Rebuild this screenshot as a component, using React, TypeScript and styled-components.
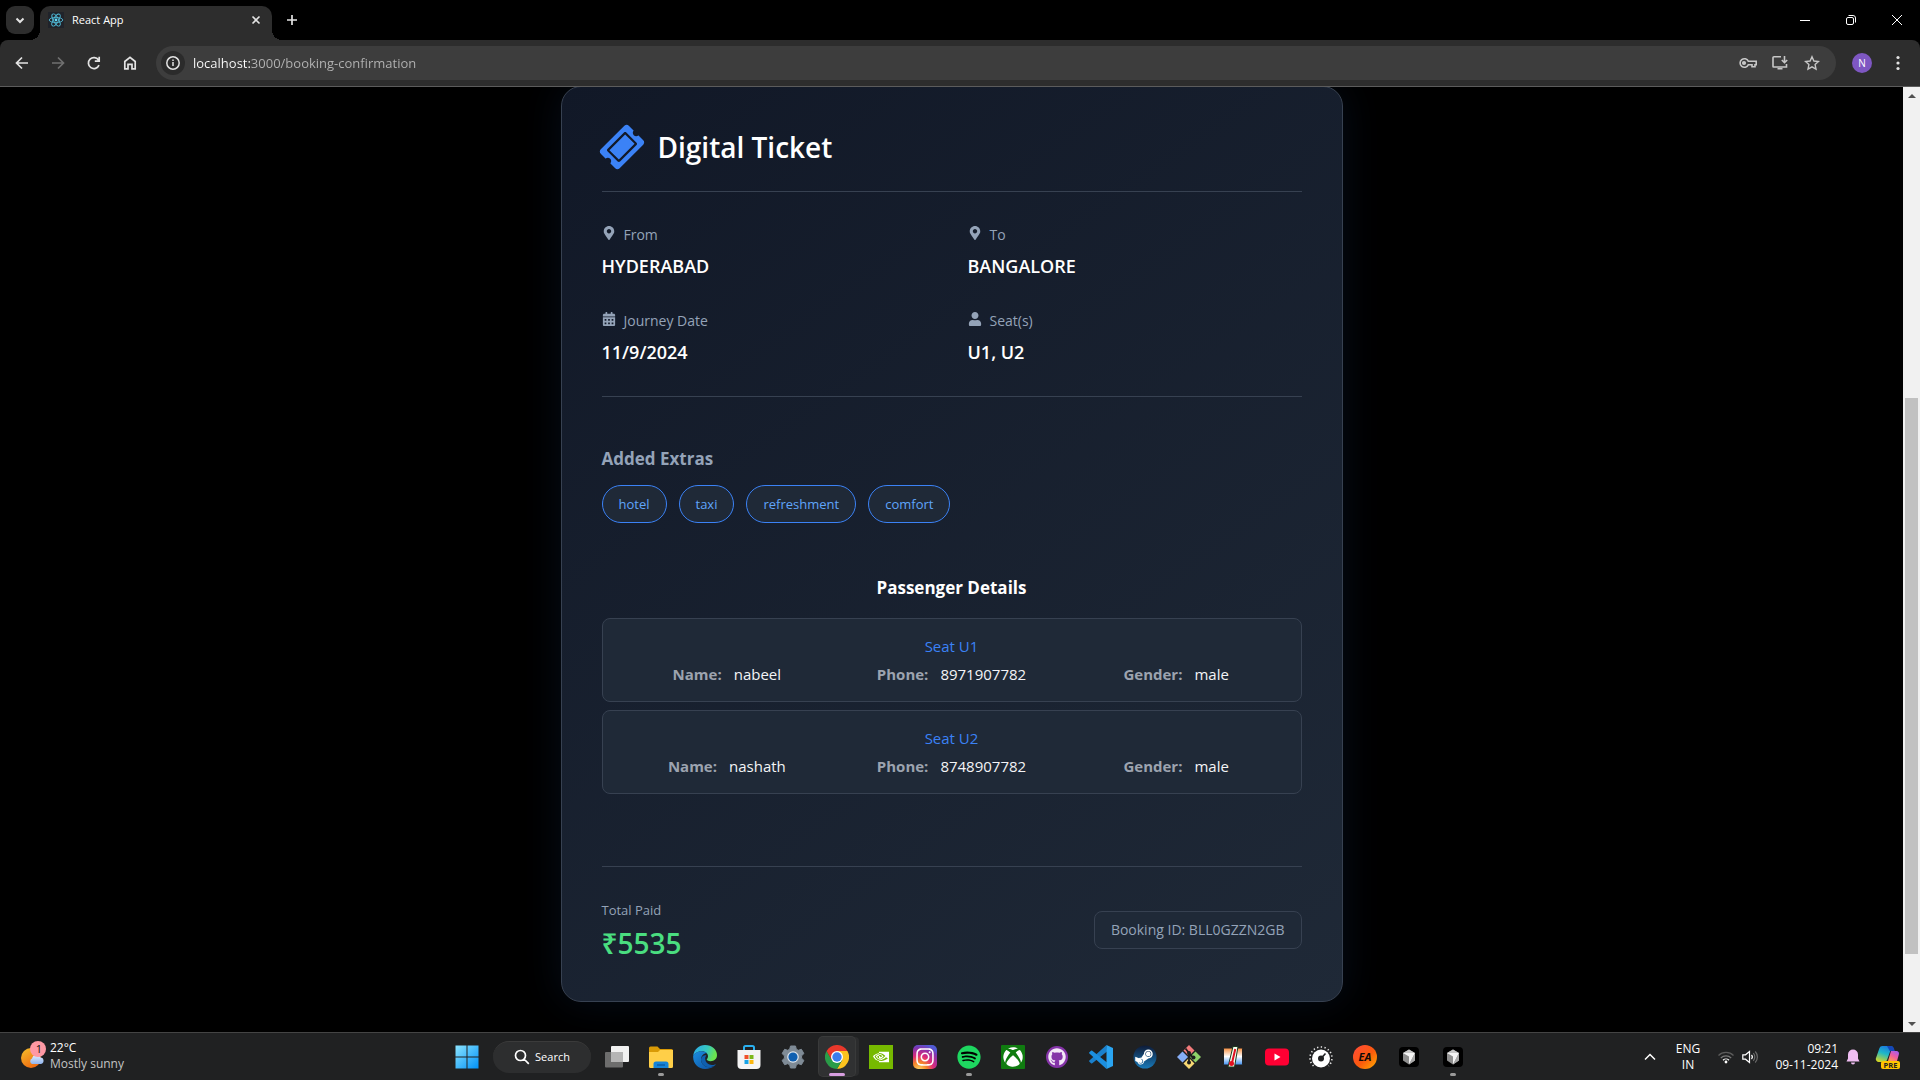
import React from "react";
import styled, { createGlobalStyle, css } from "styled-components";
import {
  FaTicketAlt,
  FaMapMarkerAlt,
  FaCalendarAlt,
  FaUser,
  FaInstagram,
  FaGithub,
  FaSteamSymbol,
  FaSpotify,
  FaXbox,
} from "react-icons/fa";
import { SiNvidia } from "react-icons/si";

const ui = `"Segoe UI", "Open Sans", "Noto Sans", sans-serif`;

const GlobalStyle = createGlobalStyle`
  *, *::before, *::after { box-sizing: border-box; }
  body { margin: 0; background: #000; font-family: ${ui}; color: #fff; overflow: hidden; }
  button, input { font: inherit; color: inherit; }
  h1, h2, h3, p, dl, dd, dt, ul { margin: 0; padding: 0; }
  svg { display: block; flex: none; }
`;

const Screen = styled.div`
  display: flex;
  flex-direction: column;
  height: 100vh;
`;

const bare = css`
  display: flex;
  align-items: center;
  justify-content: center;
  padding: 0;
  border: 0;
  background: none;
`;

/* ---------- Browser ---------- */

const TabStrip = styled.header`
  display: flex;
  height: 40px;
  flex: none;
  padding-left: 6px;
  background: #000;
`;

const TabSearch = styled.button`
  ${bare}
  width: 28px;
  height: 28px;
  margin: 6px 6px 0 0;
  border-radius: 9px;
  background: #2d2d2d;
`;

const Tab = styled.div`
  display: flex;
  align-items: center;
  width: 232px;
  height: 34px;
  margin-top: 6px;
  padding: 0 8px 6px;
  border-radius: 10px 10px 0 0;
  background: #2d2d2d;
  font-size: 11px;
  line-height: 16px;
  position: relative;

  &::before,
  &::after {
    content: "";
    position: absolute;
    bottom: 0;
    width: 10px;
    height: 10px;
  }
  &::before {
    left: -10px;
    background: radial-gradient(circle at 0 0, transparent 10px, #2d2d2d 10px);
  }
  &::after {
    right: -10px;
    background: radial-gradient(circle at 100% 0, transparent 10px, #2d2d2d 10px);
  }
`;

const TabTitle = styled.span`
  flex: 1;
  margin-left: 8px;
`;

const IconButton = styled.button<{ $w?: number; $h?: number }>`
  ${bare}
  width: ${(p) => p.$w ?? 36}px;
  height: ${(p) => p.$h ?? 28}px;
`;

const NewTab = styled(IconButton)`
  margin: 6px 0 0 6px;
`;

const WindowControls = styled.div`
  display: flex;
  margin-top: -4px;
  margin-left: auto;
`;

const ToolbarShell = styled.div`
  flex: none;
  background: #000;
`;

const Toolbar = styled.nav`
  display: flex;
  align-items: center;
  height: 47px;
  padding: 0 8px 0 4px;
  border-radius: 8px 8px 0 0;
  border-bottom: 1px solid #5c5c5c;
  background: #2d2d2d;
`;

const AddressBar = styled.label`
  display: flex;
  align-items: center;
  flex: 1;
  height: 34px;
  margin: 0 8px;
  padding: 0 8px 0 5px;
  border-radius: 17px;
  background: #3d3d3d;
`;

const SiteInfo = styled.span`
  display: flex;
  align-items: center;
  justify-content: center;
  width: 24px;
  height: 24px;
  border-radius: 50%;
  background: #2b2b2b;
`;

const UrlInput = styled.input`
  flex: 1;
  height: 24px;
  margin-left: 8px;
  padding: 0;
  border: 0;
  outline: 0;
  font-size: 13px;
  line-height: 24px;
  color: transparent;
  background: linear-gradient(90deg, #fff 58px, #b4b4b4 58px);
  background-clip: text;
  -webkit-background-clip: text;
`;

const Avatar = styled.button`
  ${bare}
  width: 20px;
  height: 20px;
  margin: 0 12px 0 8px;
  border-radius: 50%;
  background: #7e57c2;
  font-size: 10px;
`;

/* ---------- Page ---------- */

const Viewport = styled.div`
  display: flex;
  flex: 1;
  min-height: 0;
  background: #000;
`;

const Page = styled.main`
  flex: 1;
  overflow: hidden;
`;

const Ticket = styled.article`
  width: 782px;
  max-width: 100%;
  margin: -1px auto 0;
  padding: 40px;
  border: 1px solid #374151;
  border-radius: 20px;
  background: linear-gradient(145deg, #111827, #1f2937);
  box-shadow: 0 0 40px rgba(59, 130, 246, 0.1);
`;

const TicketHeader = styled.header`
  display: flex;
  align-items: center;
  gap: 16px;
  padding-bottom: 24px;
  border-bottom: 1px solid #374151;
  color: #3b82f6;

  svg {
    transform: rotate(-45deg);
  }
`;

const Title = styled.h1`
  color: #fff;
  font-size: 28px;
  font-weight: 600;
  line-height: 40px;
`;

const TripGrid = styled.dl`
  display: grid;
  grid-template-columns: 1fr 1fr;
  gap: 30px 32px;
  padding: 32px 0 30px;
  border-bottom: 1px solid #374151;
`;

const Label = styled.dt`
  display: flex;
  align-items: baseline;
  gap: 8px;
  color: #94a3b8;
  font-size: 14px;
  line-height: 22px;
`;

const Value = styled.dd`
  margin-top: 6px;
  font-size: 18px;
  font-weight: 600;
  line-height: 28px;
`;

const Extras = styled.section`
  padding: 48px 0 51px;
`;

const ExtrasTitle = styled.h2`
  color: #94a3b8;
  font-size: 17px;
  font-weight: 700;
  line-height: 28px;
`;

const Pills = styled.ul`
  display: flex;
  flex-wrap: wrap;
  gap: 12px;
  margin-top: 12px;
  list-style: none;
`;

const Pill = styled.li`
  padding: 8px 16px;
  border: 1px solid #3b82f6;
  border-radius: 20px;
  background: #1f2937;
  color: #60a5fa;
  font-size: 13px;
  line-height: 20px;
`;

const Passengers = styled.section`
  display: flex;
  flex-direction: column;
  gap: 8px;
  padding-bottom: 72px;
  border-bottom: 1px solid #374151;
`;

const PassengersTitle = styled.h2`
  margin-bottom: 8px;
  font-size: 17px;
  font-weight: 700;
  line-height: 28px;
  text-align: center;
`;

const Passenger = styled.div`
  padding: 16px;
  border: 1px solid #374151;
  border-radius: 8px;
  background: #1f2937;
  font-size: 15px;
  line-height: 22px;
  text-align: center;
`;

const Seat = styled.h3`
  color: #3b82f6;
  font-size: 15px;
  font-weight: 500;
  line-height: 22px;
`;

const Fields = styled.dl`
  display: grid;
  grid-template-columns: repeat(3, 1fr);
  gap: 8px;
  margin-top: 6px;
`;

const Field = styled.div`
  display: flex;
  justify-content: center;
  gap: 12px;

  dt {
    color: #9ca3af;
    font-weight: 700;
  }
  dd {
    color: #f3f4f6;
  }
`;

const TicketFooter = styled.footer`
  display: flex;
  align-items: center;
  justify-content: space-between;
  padding-top: 32px;
`;

const TotalLabel = styled.p`
  color: #94a3b8;
  font-size: 13px;
  line-height: 22px;
`;

const Total = styled.p`
  margin-top: 4px;
  color: #4ade80;
  font-size: 28px;
  font-weight: 600;
  line-height: 36px;
`;

const BookingId = styled.p`
  padding: 8px 16px;
  border: 1px solid #374151;
  border-radius: 8px;
  background: #1f2937;
  color: #94a3b8;
  font-size: 14px;
  line-height: 20px;
`;

const Scrollbar = styled.div`
  display: flex;
  flex-direction: column;
  align-items: center;
  width: 17px;
  background: #f1f1f1;
`;

const Gap = styled.div<{ $size: number }>`
  flex: ${(p) => p.$size};
`;

const Thumb = styled.div`
  flex: 556;
  width: 13px;
  background: #c1c1c1;
`;

/* ---------- Taskbar ---------- */

const Taskbar = styled.footer`
  display: grid;
  grid-template-columns: 1fr auto 1fr;
  align-items: center;
  flex: none;
  height: 48px;
  border-top: 1px solid #444;
  background: #202122;
  font-size: 12px;
  line-height: 16px;
`;

const Weather = styled.button`
  ${bare}
  justify-content: flex-start;
  gap: 4px;
  padding: 0 0 2px 20px;
  text-align: left;

  small {
    display: block;
    font-size: 12px;
    color: #c4c4c4;
  }
`;

const Temperature = styled.span`
  font-size: 12px;
`;

const Apps = styled.div`
  display: flex;
  align-items: center;
`;

const SearchBox = styled.button`
  ${bare}
  gap: 5px;
  width: 98px;
  height: 32px;
  margin: 0 4px;
  border-top: 1px solid #3b3b3b;
  border-radius: 16px;
  background: #2d2e2f;
  font-size: 11px;
`;

const AppButton = styled.button<{ $active?: boolean; $mark?: "open" | "focus" }>`
  ${bare}
  width: 44px;
  height: 47px;
  position: relative;

  &::before {
    content: "";
    position: absolute;
    inset: 4px;
    border-radius: 4px;
    ${(p) => p.$active && "background: #303132; box-shadow: 0 0 0 1px #393a3a, 4px 0 0 0 #2b2c2d;"}
  }
  &::after {
    content: "";
    position: absolute;
    bottom: 4px;
    width: ${(p) => (p.$mark === "focus" ? 16 : 6)}px;
    height: 3px;
    border-radius: 2px;
    background: ${(p) => (p.$mark === "focus" ? "#d79ee0" : p.$mark ? "#9a9a9a" : "transparent")};
  }
  svg {
    position: relative;
  }
`;

const Tray = styled.div`
  display: flex;
  align-items: center;
  justify-content: flex-end;
  padding-right: 12px;
`;

const Language = styled.button`
  ${bare}
  width: 40px;
  margin: 0 6px;
  text-align: center;
`;

const Clock = styled.button`
  ${bare}
  justify-content: flex-end;
  width: 76px;
  text-align: right;
`;

/* ---------- Drawings ---------- */

type StrokeProps = { size?: number; color?: string; width?: number; d: string; box?: number };
const Stroke = ({ size = 16, color = "#e3e3e3", width = 2, d, box = 16 }: StrokeProps) => (
  <svg width={size} height={size} viewBox={`0 0 ${box} ${box}`} fill="none" stroke={color} strokeWidth={width}>
    <path d={d} />
  </svg>
);

const ReactMark = () => (
  <svg width="16" height="16" viewBox="0 0 16 16">
    <rect width="16" height="16" fill="#20232a" />
    <g fill="none" stroke="#4fb8d4" strokeWidth="0.9">
      <ellipse cx="8" cy="8" rx="6.8" ry="2.6" />
      <ellipse cx="8" cy="8" rx="6.8" ry="2.6" transform="rotate(60 8 8)" />
      <ellipse cx="8" cy="8" rx="6.8" ry="2.6" transform="rotate(120 8 8)" />
    </g>
    <circle cx="8" cy="8" r="1.4" fill="#61dafb" />
  </svg>
);

const WeatherArt = () => (
  <svg width="26" height="30" viewBox="0 0 26 30">
    <defs>
      <linearGradient id="sun" x1="0" y1="0" x2="0.6" y2="1">
        <stop offset="0" stopColor="#f6c02c" />
        <stop offset="1" stopColor="#ee6a10" />
      </linearGradient>
      <linearGradient id="cloud" x1="0" y1="0" x2="0" y2="1">
        <stop offset="0" stopColor="#e4efff" />
        <stop offset="1" stopColor="#8fb4ee" />
      </linearGradient>
    </defs>
    <circle cx="11" cy="17" r="10" fill="url(#sun)" />
    <path d="M12 23a3 3 0 0 1 0-5.500a4.500 4.500 0 0 1 8.500-1a3.300 3.300 0 0 1 .500 6.500z" fill="url(#cloud)" />
    <circle cx="18" cy="8" r="8" fill="#ff99a4" />
    <text x="19" y="12" fontSize="11" fill="#111" textAnchor="middle">1</text>
  </svg>
);

const WindowsMark = () => (
  <svg width="24" height="24" viewBox="0 0 24 24">
    <defs>
      <linearGradient id="win" x1="0" y1="0" x2="1" y2="1">
        <stop offset="0" stopColor="#8be4ff" />
        <stop offset="1" stopColor="#0091f8" />
      </linearGradient>
    </defs>
    <path d="M.5 .5h11v11H.5zM12.500 .5h11v11h-11zM.5 12.500h11v11H.5zM12.500 12.500h11v11h-11z" fill="url(#win)" />
  </svg>
);

const TaskView = () => (
  <svg width="24" height="24" viewBox="0 0 24 24">
    <rect x="6" y="1" width="18" height="16" rx="1" fill="#f1f1f1" />
    <rect x="0" y="7" width="18" height="15.500" rx="1" fill="#6d6d6d" />
    <path d="M6 7h12v10H6z" fill="#b5b5b5" />
  </svg>
);

const Folder = () => (
  <svg width="24" height="24" viewBox="0 0 24 24">
    <path d="M0 3a1.500 1.500 0 0 1 1.500-1.500h7l2.500 2.500h11.500a1.500 1.500 0 0 1 1.500 1.500v8H0z" fill="#d99a06" />
    <path d="M0 7h9l2-2h13v16.500a1.500 1.500 0 0 1-1.500 1.500h-21A1.500 1.500 0 0 1 0 21.500z" fill="#ffcf48" />
    <path d="M4.500 23v-4a2.500 2.500 0 0 1 2.500-2.500h10a2.500 2.500 0 0 1 2.500 2.500v4z" fill="#1583d8" />
    <path d="M8 20h8" stroke="#0a5ca8" strokeWidth="1.500" />
  </svg>
);

const Edge = () => (
  <svg width="24" height="24" viewBox="0 0 24 24">
    <defs>
      <linearGradient id="edgeA" x1="0" y1="0" x2="1" y2="0.300">
        <stop offset="0" stopColor="#2ba8ee" />
        <stop offset="0.600" stopColor="#36c8c0" />
        <stop offset="1" stopColor="#6be34e" />
      </linearGradient>
      <linearGradient id="edgeB" x1="0" y1="0" x2="1" y2="1">
        <stop offset="0" stopColor="#1b8ee0" />
        <stop offset="1" stopColor="#0d4f9e" />
      </linearGradient>
    </defs>
    <path d="M.3 10.500C1 4.200 6 0 12 0c7 0 12 4.800 12 10 0 4-3 6.200-6.300 6.200-2.500 0-4-.8-4-1.600 0-.7 1.300-1.200 1.300-3.400 0-2.700-2.600-5-6-5-4 0-7 1.800-8.700 4.300z" fill="url(#edgeA)" />
    <path d="M.2 10.800C1.500 8 5 6.200 9 6.200c2.300 0 4 .8 5 2-3-.3-6 2.400-6 6.300 0 4.500 4 7.700 8.500 7.700 2.500 0 4.200-.7 5.500-1.600C19.800 22.700 16 24 12 24 5 24-.5 18 .2 10.800z" fill="url(#edgeB)" />
    <path d="M8 14.500c0 4.500 4 7.700 8.500 7.700 2.300 0 4.200-.8 5.900-2.200.4-.4.1-.9-.5-.6-4.500 1.800-9.300-.8-9.700-5.300-.1-1.800.7-3 1.200-3.800-2.600-.5-5.400 1.200-5.400 4.200z" fill="#0f5fae" />
  </svg>
);

const Store = () => (
  <svg width="24" height="24" viewBox="0 0 24 24">
    <path d="M7 6V2.500A1.500 1.500 0 0 1 8.500 1h7A1.500 1.500 0 0 1 17 2.500V6" fill="none" stroke="#2ab0ef" strokeWidth="2" />
    <path d="M.5 5h23v15a4 4 0 0 1-4 4h-15a4 4 0 0 1-4-4z" fill="#f4f4f4" />
    <path d="M7.500 10h4v4h-4z" fill="#f0512a" />
    <path d="M12.500 10h4v4h-4z" fill="#7cb81a" />
    <path d="M7.500 15h4v4h-4z" fill="#16a3e8" />
    <path d="M12.500 15h4v4h-4z" fill="#fbb70f" />
  </svg>
);

const Settings = () => (
  <svg width="24" height="24" viewBox="0 0 24 24">
    <path
      d="M9.500 1h5l.8 3.200 2 1.100 3.100-1 2.500 4.300-2.300 2.200v2.400l2.300 2.200-2.500 4.300-3.100-1-2 1.100-.8 3.200h-5l-.8-3.200-2-1.100-3.100 1-2.500-4.300 2.300-2.200v-2.400L1.100 8.600l2.500-4.300 3.100 1 2-1.100z"
      fill="#7f8b96"
      stroke="#7f8b96"
      strokeLinejoin="round"
    />
    <circle cx="12" cy="12" r="5.800" fill="#dfe6ee" />
    <circle cx="12" cy="12" r="4.600" fill="#0f5fb0" />
  </svg>
);

const Chrome = () => (
  <svg width="24" height="24" viewBox="0 0 24 24">
    <path d="M12 6h10.400A12 12 0 0 1 12 24l5.200-9z" fill="#fcc31e" />
    <path d="M1.600 6A12 12 0 0 0 12 24l5.200-9H6.800z" fill="#2a9c48" />
    <path d="M1.600 6A12 12 0 0 1 22.400 6H12l-5.200 9z" fill="#e8382b" />
    <circle cx="12" cy="12" r="6" fill="#fff" />
    <circle cx="12" cy="12" r="4.700" fill="#3b7ded" />
  </svg>
);

const tile = (bg: string, radius: number, glyph: React.ReactNode) => (
  <svg width="24" height="24" viewBox="0 0 24 24">
    <rect width="24" height="24" rx={radius} fill={bg} />
    {glyph}
  </svg>
);

const Nvidia = () => tile("#76b900", 0, <SiNvidia x="4" y="4" size={16} color="#fff" />);

const Instagram = () => (
  <svg width="24" height="24" viewBox="0 0 24 24">
    <defs>
      <radialGradient id="insta" cx="0.250" cy="1.050" r="1.100">
        <stop offset="0" stopColor="#fedb6a" />
        <stop offset="0.300" stopColor="#f58529" />
        <stop offset="0.550" stopColor="#dd2a7b" />
        <stop offset="0.850" stopColor="#8134af" />
        <stop offset="1" stopColor="#515bd4" />
      </radialGradient>
    </defs>
    <rect width="24" height="24" rx="5" fill="url(#insta)" />
    <FaInstagram x="2" y="2" size={20} color="#fff" />
  </svg>
);

const Spotify = () => (
  <svg width="24" height="24" viewBox="0 0 24 24">
    <circle cx="12" cy="12" r="11" fill="#000" />
    <FaSpotify size={24} color="#1ed760" />
  </svg>
);

const Xbox = () => tile("#107c10", 1, <FaXbox x="2" y="2" size={20} color="#fff" />);

const Github = () => (
  <svg width="24" height="24" viewBox="0 0 24 24">
    <circle cx="12" cy="12" r="11" fill="#8534a8" />
    <FaGithub x="3" y="3" size={18} color="#f3e8f7" />
  </svg>
);

const VsCode = () => (
  <svg width="24" height="24" viewBox="0 0 24 24">
    <path d="M17.500 0L.4 15.400a.9.900 0 0 0 0 1.300l1.600 1.500a1 1 0 0 0 1.300 0L18 6.500z" fill="#1a80cc" />
    <path d="M17.500 24L.4 8.600a.9.900 0 0 1 0-1.300l1.600-1.500a1 1 0 0 1 1.300 0L18 17.500z" fill="#1b8fe0" />
    <path d="M17.500 0L24 3v18l-6.500 3z" fill="#2aa5f2" />
  </svg>
);

const Steam = () => (
  <svg width="24" height="24" viewBox="0 0 24 24">
    <defs>
      <linearGradient id="steam" x1="0" y1="0" x2="0" y2="1">
        <stop offset="0" stopColor="#0e1b38" />
        <stop offset="1" stopColor="#1879b8" />
      </linearGradient>
    </defs>
    <circle cx="12" cy="12" r="11.500" fill="url(#steam)" />
    <FaSteamSymbol x="1" y="2" size={20} color="#fff" />
  </svg>
);

const Git = () => (
  <svg width="24" height="24" viewBox="0 0 24 24">
    <path d="M12 0l5.500 5.500L12 11 6.500 5.500z" fill="#f27b7b" />
    <path d="M18.500 6.500L24 12l-5.500 5.500L13 12z" fill="#8fd26a" />
    <path d="M5.500 6.500L11 12l-5.500 5.500L0 12z" fill="#86adf5" />
    <path d="M12 13l5.500 5.500L12 24l-5.500-5.500z" fill="#f8d873" />
    <path d="M8.500 3.500L12 8v9.500M12 8.500l4 4" fill="none" stroke="#1c1c1c" strokeWidth="1.800" />
    <circle cx="12" cy="8" r="2" fill="#1c1c1c" />
    <circle cx="12" cy="17.500" r="2" fill="#1c1c1c" />
    <circle cx="16.500" cy="12.500" r="2" fill="#1c1c1c" />
  </svg>
);

const Thermometer = () => (
  <svg width="24" height="24" viewBox="0 0 24 24">
    <defs>
      <linearGradient id="heat" x1="0" y1="0" x2="0" y2="1">
        <stop offset="0" stopColor="#f58b3a" />
        <stop offset="0.500" stopColor="#ffffff" />
        <stop offset="1" stopColor="#3a8df0" />
      </linearGradient>
    </defs>
    <rect x="2.500" y="3" width="19" height="17" rx="1" fill="url(#heat)" stroke="#222" />
    <path d="M12 1.500h5L13.500 22H7z" fill="#f4fff0" stroke="#1f3a1f" />
    <path d="M14.300 4L11 18" stroke="#e01020" strokeWidth="2" />
    <circle cx="10.500" cy="18.500" r="2.500" fill="#e01020" />
  </svg>
);

const YouTube = () => (
  <svg width="24" height="24" viewBox="0 0 24 24">
    <rect y="3.500" width="24" height="17" rx="4" fill="#ff0033" />
    <path d="M9.500 8.500l6 3.500-6 3.500z" fill="#fff" />
  </svg>
);

const Dial = () => (
  <svg width="24" height="24" viewBox="0 0 24 24">
    <path d="M4.500 21A11 11 0 1 1 19.500 21" fill="none" stroke="#e8e8e8" strokeWidth="1.600" strokeDasharray="1.300 2.400" />
    <circle cx="12" cy="13.500" r="9" fill="#fff" />
    <circle cx="12" cy="13.500" r="3" fill="#202122" />
    <path d="M12 13.500l4.500-5" stroke="#202122" strokeWidth="1.600" />
  </svg>
);

const Ea = () => (
  <svg width="24" height="24" viewBox="0 0 24 24">
    <defs>
      <linearGradient id="ea" x1="0" y1="0" x2="1" y2="1">
        <stop offset="0" stopColor="#ff4a3c" />
        <stop offset="0.550" stopColor="#fb5a0c" />
        <stop offset="1" stopColor="#ffb000" />
      </linearGradient>
    </defs>
    <circle cx="12" cy="12" r="12" fill="url(#ea)" />
    <text x="12" y="16" fontSize="11" fontWeight="700" fontStyle="italic" textAnchor="middle" fill="#120a08">EA</text>
  </svg>
);

const Cube = () => (
  <svg width="24" height="24" viewBox="0 0 24 24">
    <rect x="2" y="2" width="20" height="20" rx="4" fill="#000" />
    <path d="M12 4.500l6 3.500v7.500L12 19.500l-6-4V8z" fill="#8f8f8f" />
    <path d="M12 4.500L18 8H6z" fill="#c8c8c8" />
    <path d="M6 8h12l-6 11.500V11.500z" fill="#f4f4f4" />
    <path d="M18 8v7.500l-6 4z" fill="#a8a8a8" />
  </svg>
);

const Copilot = () => (
  <svg width="26" height="26" viewBox="0 0 26 26">
    <defs>
      <linearGradient id="copA" x1="0.600" y1="0" x2="0.200" y2="1">
        <stop offset="0" stopColor="#1a78e0" />
        <stop offset="0.450" stopColor="#1fb8c8" />
        <stop offset="1" stopColor="#d8d820" />
      </linearGradient>
      <linearGradient id="copB" x1="0.800" y1="0" x2="0.200" y2="1">
        <stop offset="0" stopColor="#a45cf0" />
        <stop offset="0.500" stopColor="#ee5ca0" />
        <stop offset="1" stopColor="#ff9a50" />
      </linearGradient>
    </defs>
    <path d="M7.500 2h8a3 3 0 0 1 2.800 2l1 3h-4L12 16a3 3 0 0 1-2.800 2H4a3 3 0 0 1-3-4L4.500 4a3 3 0 0 1 3-2z" fill="url(#copA)" />
    <path d="M12 2h4a3 3 0 0 1 2.800 2l1 3h-5z" fill="#1548b8" />
    <path d="M16 7h5.500a2.500 2.500 0 0 1 2.400 3.200L22 17h-9z" fill="url(#copB)" />
    <rect x="6" y="17" width="19" height="8" rx="2" fill="#ffc400" />
    <text x="15.500" y="23.800" fontSize="7.500" fontWeight="700" textAnchor="middle" fill="#222">PRE</text>
  </svg>
);

/* ---------- Data ---------- */

const trip = [
  { icon: <FaMapMarkerAlt size={14} />, label: "From", value: "HYDERABAD" },
  { icon: <FaMapMarkerAlt size={14} />, label: "To", value: "BANGALORE" },
  { icon: <FaCalendarAlt size={14} />, label: "Journey Date", value: "11/9/2024" },
  { icon: <FaUser size={14} />, label: "Seat(s)", value: "U1, U2" },
];

const extras = ["hotel", "taxi", "refreshment", "comfort"];

const passengers = [
  { seat: "U1", Name: "nabeel", Phone: "8971907782", Gender: "male" },
  { seat: "U2", Name: "nashath", Phone: "8748907782", Gender: "male" },
];

const apps: { name: string; art: React.ReactNode; mark?: "open" | "focus" }[] = [
  { name: "Task view", art: <TaskView /> },
  { name: "File Explorer", art: <Folder />, mark: "open" },
  { name: "Edge", art: <Edge /> },
  { name: "Store", art: <Store /> },
  { name: "Settings", art: <Settings /> },
  { name: "Chrome", art: <Chrome />, mark: "focus" },
  { name: "NVIDIA", art: <Nvidia /> },
  { name: "Instagram", art: <Instagram /> },
  { name: "Spotify", art: <Spotify />, mark: "open" },
  { name: "Xbox", art: <Xbox /> },
  { name: "GitHub", art: <Github /> },
  { name: "VS Code", art: <VsCode /> },
  { name: "Steam", art: <Steam /> },
  { name: "Git", art: <Git /> },
  { name: "Temperature", art: <Thermometer /> },
  { name: "YouTube", art: <YouTube /> },
  { name: "Fan control", art: <Dial /> },
  { name: "EA", art: <Ea /> },
  { name: "Cursor", art: <Cube /> },
  { name: "Cursor window", art: <Cube />, mark: "open" },
];

export default function App() {
  return (
    <Screen>
      <GlobalStyle />
      <TabStrip>
        <TabSearch aria-label="Search tabs">
          <Stroke size={10} box={10} d="M1.500 3.500L5 7l3.500-3.500" />
        </TabSearch>
        <Tab>
          <ReactMark />
          <TabTitle>React App</TabTitle>
          <IconButton $w={16} $h={16} aria-label="Close tab">
            <Stroke size={10} box={10} width={1.6} d="M1.500 1.500l7 7M8.500 1.500l-7 7" />
          </IconButton>
        </Tab>
        <NewTab $w={28} aria-label="New tab">
          <Stroke size={12} box={12} width={1.7} d="M6 1v10M1 6h10" />
        </NewTab>
        <WindowControls>
          <IconButton $w={46} $h={48} aria-label="Minimize">
            <Stroke size={10} box={10} width={1} color="#fff" d="M0 5.500h10" />
          </IconButton>
          <IconButton $w={46} $h={48} aria-label="Restore">
            <Stroke size={10} box={10} width={1} color="#fff" d="M2 2.500h4a1.500 1.500 0 0 1 1.500 1.500v4A1.500 1.500 0 0 1 6 9.500H2A1.500 1.500 0 0 1 .5 8V4A1.500 1.500 0 0 1 2 2.500zM2.500 .5H7A2.500 2.500 0 0 1 9.500 3v4.500" />
          </IconButton>
          <IconButton $w={46} $h={48} aria-label="Close">
            <Stroke size={10} box={10} width={1} color="#fff" d="M0 0l10 10M10 0L0 10" />
          </IconButton>
        </WindowControls>
      </TabStrip>
      <ToolbarShell>
        <Toolbar>
          <IconButton aria-label="Back">
            <Stroke width={1.7} d="M14 8H2.500M8 2.500L2.500 8 8 13.500" />
          </IconButton>
          <IconButton aria-label="Forward">
            <Stroke width={1.7} color="#707070" d="M2 8h11.500M8 2.500L13.500 8 8 13.500" />
          </IconButton>
          <IconButton aria-label="Reload">
            <Stroke width={1.7} d="M13 10.200A5.500 5.500 0 1 1 12.500 5M13.200 1.800v4.400H8.800" />
          </IconButton>
          <IconButton aria-label="Home">
            <Stroke width={1.7} d="M2.800 6.500L8 2.300l5.200 4.200v7.300H10V9.300H6v4.500H2.800z" />
          </IconButton>
          <AddressBar>
            <SiteInfo>
              <Stroke width={1.5} d="M8 1.800a6.200 6.200 0 1 0 0 12.400A6.200 6.200 0 0 0 8 1.800zM8 7v4M8 4.600v1.500" />
            </SiteInfo>
            <UrlInput aria-label="Address" defaultValue="localhost:3000/booking-confirmation" />
            <IconButton $w={32} aria-label="Passwords">
              <svg width="18" height="12" viewBox="0 0 18 12" fill="none" stroke="#c7c7c7" strokeWidth="1.600">
                <path d="M9.300 4.200A4.300 4.300 0 1 0 9.300 7.800H13v2h3v-2h1.200V4.200z" />
                <circle cx="5" cy="6" r="1.300" fill="#c7c7c7" />
              </svg>
            </IconButton>
            <IconButton $w={32} aria-label="Install app">
              <Stroke color="#c7c7c7" width={1.6} d="M9 1.800H2a1 1 0 0 0-1 1v8.700a.5.500 0 0 0 .5.500h13V9M5.500 13.800h5M12.500 1v6.500M9.800 5l2.700 2.700L15.200 5" />
            </IconButton>
            <IconButton $w={32} aria-label="Bookmark">
              <Stroke color="#c7c7c7" width={1.4} d="M8 1.800l1.900 4.200 4.600.5-3.400 3.100.9 4.500L8 11.800l-4 2.300.9-4.500L1.500 6.500l4.600-.5z" />
            </IconButton>
          </AddressBar>
          <Avatar aria-label="Profile">N</Avatar>
          <IconButton $w={28} aria-label="Menu">
            <svg width="4" height="16" viewBox="0 0 4 16" fill="#e3e3e3">
              <circle cx="2" cy="2.500" r="1.600" />
              <circle cx="2" cy="8" r="1.600" />
              <circle cx="2" cy="13.500" r="1.600" />
            </svg>
          </IconButton>
        </Toolbar>
      </ToolbarShell>

      <Viewport>
        <Page>
          <Ticket>
            <TicketHeader>
              <FaTicketAlt size={40} />
              <Title>Digital Ticket</Title>
            </TicketHeader>
            <TripGrid>
              {trip.map((t) => (
                <div key={t.label}>
                  <Label>
                    {t.icon}
                    {t.label}
                  </Label>
                  <Value>{t.value}</Value>
                </div>
              ))}
            </TripGrid>
            <Extras>
              <ExtrasTitle>Added Extras</ExtrasTitle>
              <Pills>
                {extras.map((e) => (
                  <Pill key={e}>{e}</Pill>
                ))}
              </Pills>
            </Extras>
            <Passengers>
              <PassengersTitle>Passenger Details</PassengersTitle>
              {passengers.map((p) => (
                <Passenger key={p.seat}>
                  <Seat>Seat {p.seat}</Seat>
                  <Fields>
                    {(["Name", "Phone", "Gender"] as const).map((k) => (
                      <Field key={k}>
                        <dt>{k}:</dt>
                        <dd>{p[k]}</dd>
                      </Field>
                    ))}
                  </Fields>
                </Passenger>
              ))}
            </Passengers>
            <TicketFooter>
              <div>
                <TotalLabel>Total Paid</TotalLabel>
                <Total>₹5535</Total>
              </div>
              <BookingId>Booking ID: BLL0GZZN2GB</BookingId>
            </TicketFooter>
          </Ticket>
        </Page>
        <Scrollbar>
          <IconButton $w={17} $h={17} aria-label="Scroll up">
            <svg width="8" height="4" viewBox="0 0 8 4"><path d="M4 0l4 4H0z" fill="#505050" /></svg>
          </IconButton>
          <Gap $size={294} />
          <Thumb />
          <Gap $size={61} />
          <IconButton $w={17} $h={17} aria-label="Scroll down">
            <svg width="8" height="4" viewBox="0 0 8 4"><path d="M4 4l4-4H0z" fill="#505050" /></svg>
          </IconButton>
        </Scrollbar>
      </Viewport>

      <Taskbar>
        <Weather>
          <WeatherArt />
          <Temperature>
            22°C
            <small>Mostly sunny</small>
          </Temperature>
        </Weather>
        <Apps>
          <AppButton aria-label="Start">
            <WindowsMark />
          </AppButton>
          <SearchBox>
            <Stroke width={1.7} color="#fff" d="M6.500 1.500a5 5 0 1 0 0 10a5 5 0 0 0 0-10zM10 10l4.800 4.800" />
            Search
          </SearchBox>
          {apps.map((a) => (
            <AppButton key={a.name} aria-label={a.name} $mark={a.mark} $active={a.mark === "focus"}>
              {a.art}
            </AppButton>
          ))}
        </Apps>
        <Tray>
          <IconButton $w={24} aria-label="Hidden icons">
            <Stroke size={12} box={12} width={1.5} color="#fff" d="M1 8.500l5-5 5 5" />
          </IconButton>
          <Language>
            ENG
            <br />
            IN
          </Language>
          <IconButton $w={24} aria-label="Network">
            <svg width="16" height="16" viewBox="0 0 16 16" fill="none" strokeWidth="1.200">
              <path d="M.5 6.500a10.500 10.500 0 0 1 15 0" stroke="#5c5c5c" />
              <path d="M2.800 9a7.500 7.500 0 0 1 10.400 0" stroke="#777" />
              <path d="M5 11.200a4.300 4.300 0 0 1 6 0" stroke="#fff" />
              <circle cx="8" cy="13" r="1.400" fill="#fff" />
            </svg>
          </IconButton>
          <IconButton $w={24} aria-label="Volume">
            <svg width="16" height="16" viewBox="0 0 16 16" fill="none" strokeWidth="1.200">
              <path d="M.8 5.800h2.700L7.500 2.500v11L3.500 10.200H.8z" stroke="#fff" />
              <path d="M9.500 6a3 3 0 0 1 0 4" stroke="#fff" />
              <path d="M11.300 4.200a5.500 5.500 0 0 1 0 7.600M13.200 2.500a8 8 0 0 1 0 11" stroke="#6a6a6a" />
            </svg>
          </IconButton>
          <Clock>
            <span>
              09:21
              <br />
              09-11-2024
            </span>
          </Clock>
          <IconButton $w={30} aria-label="Notifications">
            <svg width="14" height="16" viewBox="0 0 14 16" fill="#efbdf2">
              <path d="M7 .5a5 5 0 0 1 5 5v4l1.500 3H.5l1.500-3v-4a5 5 0 0 1 5-5zM5 13.500h4a2 2 0 0 1-4 0z" />
            </svg>
          </IconButton>
          <IconButton $w={40} aria-label="Copilot">
            <Copilot />
          </IconButton>
        </Tray>
      </Taskbar>
    </Screen>
  );
}
